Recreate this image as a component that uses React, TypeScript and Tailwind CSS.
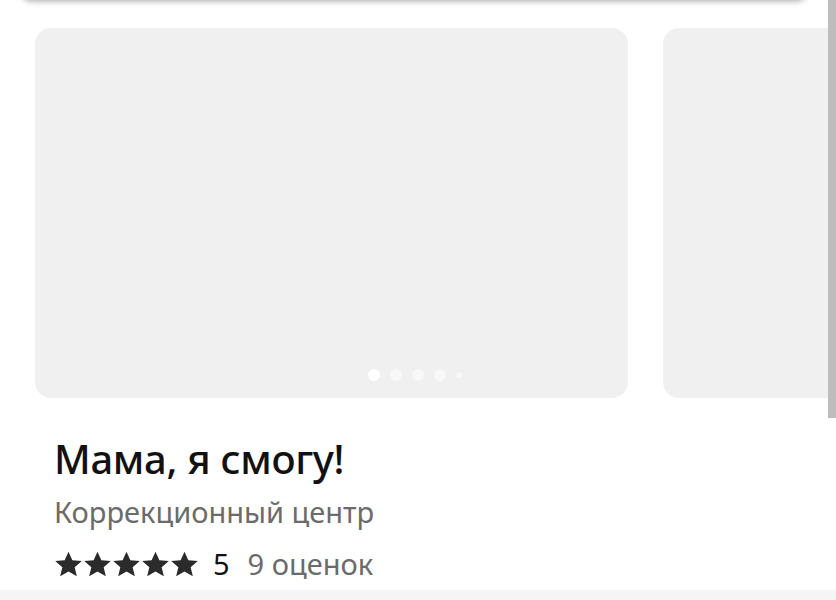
function Dots() {
  return (
    <div className="absolute left-[333px] bottom-[17px] flex items-center gap-[10px]">
      <span className="w-3 h-3 rounded-full bg-white" />
      <span className="w-3 h-3 rounded-full bg-white/50" />
      <span className="w-3 h-3 rounded-full bg-white/50" />
      <span className="w-3 h-3 rounded-full bg-white/50" />
      <span className="w-[6px] h-[6px] rounded-full bg-white/50" />
    </div>
  );
}

function StarIcon() {
  return (
    <svg viewBox="0 0 24 24" className="w-[29px] h-[29px]" fill="#2b2b2b">
      <polygon points="12,1.5 15.2,8.4 23,9 17.1,14.2 18.9,21.8 12,17.8 5.1,21.8 6.9,14.2 1,9 8.8,8.4" />
    </svg>
  );
}

export default function App() {
  return (
    <div className="relative w-[836px] h-[600px] overflow-hidden bg-white font-['Noto_Sans',sans-serif]">
      <div className="mx-5 mr-7 -mt-3 h-3 rounded-b-xl bg-white shadow-[0_1px_6px_rgba(0,0,0,0.35)]" />

      <div className="flex gap-[35px] pl-[35px] pt-7">
        <div className="relative shrink-0 w-[593px] h-[370px] rounded-2xl bg-[#f0f0f0]">
          <Dots />
        </div>
        <div className="shrink-0 w-[593px] h-[370px] rounded-2xl bg-[#f0f0f0]" />
      </div>

      <div className="pl-[54px] pt-[37px]">
        <h1 className="text-[40px] leading-[48px] font-medium text-[#111] tracking-[-0.3px]">
          Мама, я смогу!
        </h1>
        <p className="mt-[11px] text-[29px] leading-[36px] text-[#6b6b6b]">Коррекционный центр</p>
        <div className="mt-[16px] flex items-center text-[29px] leading-[36px]">
          <div className="flex">
            {[0, 1, 2, 3, 4].map((i) => (
              <StarIcon key={i} />
            ))}
          </div>
          <span className="ml-[14px] text-[#111]">5</span>
          <span className="ml-[18px] text-[#6b6b6b]">9 оценок</span>
        </div>
      </div>

      <div className="absolute left-0 right-0 bottom-0 h-[10px] bg-[#f5f5f5]" />
      <div className="absolute right-0 top-0 w-2 h-[418px] bg-[#bdbdbd]" />
    </div>
  );
}
